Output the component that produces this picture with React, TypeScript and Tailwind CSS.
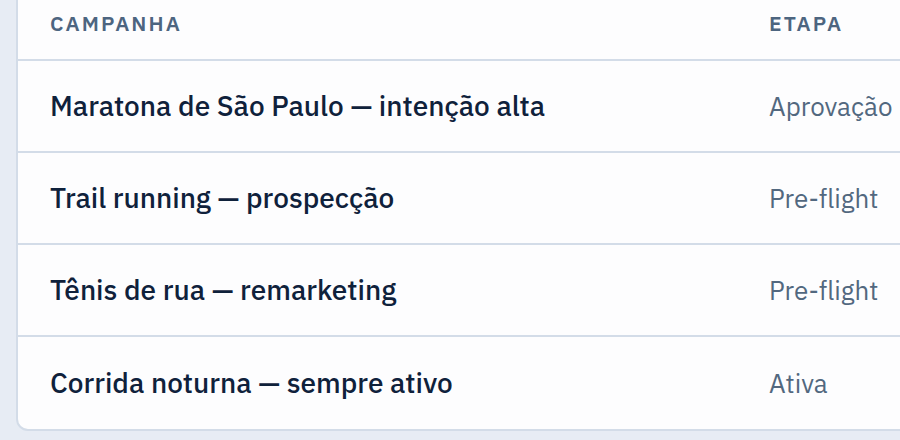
import React from "react";

const rows = [
  { name: "Maratona de São Paulo — intenção alta", stage: "Aprovação" },
  { name: "Trail running — prospecção", stage: "Pre-flight" },
  { name: "Tênis de rua — remarketing", stage: "Pre-flight" },
  { name: "Corrida noturna — sempre ativo", stage: "Ativa" },
];

export default function App() {
  return (
    <div
      className="w-[900px] h-[440px] overflow-hidden bg-[#e7ecf4]"
      style={{ fontFamily: "'IBM Plex Sans', 'Noto Sans', 'Liberation Sans', sans-serif" }}
    >
      <div className="ml-[16px] -mt-[14px] w-[1000px] rounded-[12px] border-2 border-[#d3dce8] bg-[#fdfdfe] overflow-hidden">
        <div className="grid grid-cols-[719px_1fr] h-[73px] items-center border-b-2 border-[#d3dce8]">
          <div className="pl-[32px] text-[21px] font-semibold tracking-[0.1em] text-[#4d6580] uppercase">Campanha</div>
          <div className="pl-[32px] text-[21px] font-semibold tracking-[0.1em] text-[#4d6580] uppercase">Etapa</div>
        </div>
        {rows.map((r, i) => (
          <div
            key={i}
            className={
              "grid grid-cols-[719px_1fr] h-[92px] items-center " +
              (i < rows.length - 1 ? "border-b-2 border-[#d3dce8]" : "")
            }
          >
            <div className="pl-[32px] text-[28px] font-medium text-[#0f213b]">{r.name}</div>
            <div className="pl-[32px] text-[26px] text-[#52687f]">{r.stage}</div>
          </div>
        ))}
      </div>
    </div>
  );
}
